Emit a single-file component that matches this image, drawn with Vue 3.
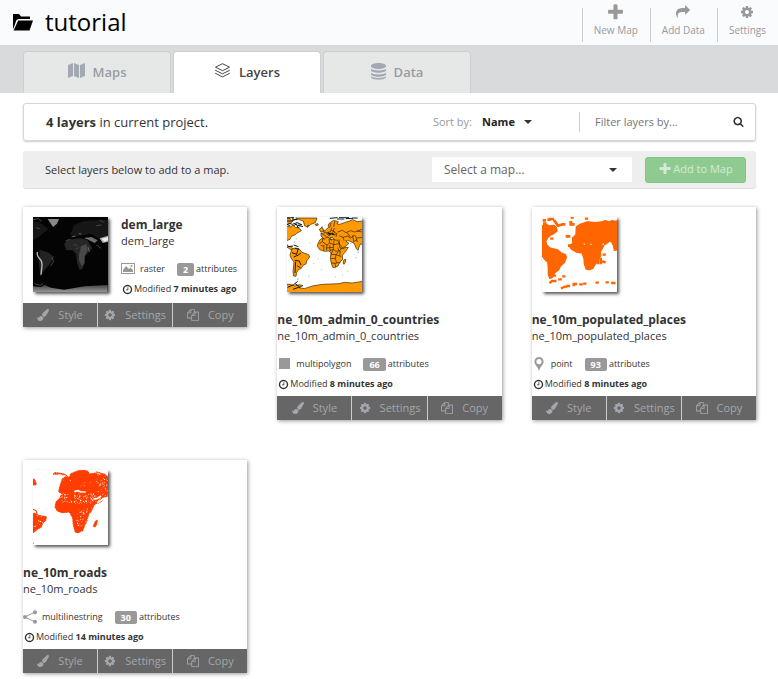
<script setup>
import { ref } from 'vue'

const icons = {
  plus: 'M1600 736v192q0 40-28 68t-68 28h-416v416q0 40-28 68t-68 28h-192q-40 0-68-28t-28-68v-416h-416q-40 0-68-28t-28-68v-192q0-40 28-68t68-28h416v-416q0-40 28-68t68-28h192q40 0 68 28t28 68v416h416q40 0 68 28t28 68z',
  share: 'M1792 640q0 26-19 45l-512 512q-19 19-45 19t-45-19-19-45v-256h-224q-98 0-175.5 6t-154 21.5-133 42.5-105.5 69.5-80 101-48.5 138.5-17.5 181q0 55 5 123 0 6 2.5 23.5t2.5 26.5q0 15-8.5 25t-23.5 10q-16 0-28-17-7-9-13-22t-13.5-30-10.5-24q-127-285-127-451 0-199 53-333 162-403 875-403h224v-256q0-26 19-45t45-19 45 19l512 512q19 19 19 45z',
  cog: 'M1152 896q0-106-75-181t-181-75-181 75-75 181 75 181 181 75 181-75 75-181zm512-109v222q0 12-8 23t-20 13l-185 28q-19 54-39 91 35 50 107 138 10 12 10 25t-9 23q-27 37-99 108t-94 71q-12 0-26-9l-138-108q-44 23-91 38-16 136-29 186-7 28-36 28h-222q-14 0-24.5-8.5t-11.5-21.5l-28-184q-49-16-90-37l-141 107q-10 9-25 9-14 0-25-11-126-114-165-168-7-10-7-23 0-12 8-23 15-21 51-66.5t54-70.5q-27-50-41-99l-183-27q-13-2-21-12.5t-8-23.5v-222q0-12 8-23t19-13l186-28q14-46 39-92-40-57-107-138-10-12-10-24 0-10 9-23 26-36 98.5-107.5t94.5-71.5q13 0 26 10l138 107q44-23 91-38 16-136 29-186 7-28 36-28h222q14 0 24.5 8.5t11.5 21.5l28 184q49 16 90 37l142-107q9-9 24-9 13 0 25 10 129 119 165 170 7 8 7 22 0 12-8 23-15 21-51 66.5t-54 70.5q26 50 41 98l183 28q13 2 21 12.5t8 23.5z',
  search: 'M1216 832q0-185-131.5-316.5t-316.5-131.5-316.5 131.5-131.5 316.5 131.5 316.5 316.5 131.5 316.5-131.5 131.5-316.5zm512 832q0 52-38 90t-90 38q-54 0-90-38l-343-342q-179 124-399 124-143 0-273.5-55.5t-225-150-150-225-55.5-273.5 55.5-273.5 150-225 225-150 273.5-55.5 273.5 55.5 225 150 150 225 55.5 273.5q0 220-124 399l343 343q37 37 37 90z',
  clock: 'M1024 544v448q0 14-9 23t-23 9h-320q-14 0-23-9t-9-23v-64q0-14 9-23t23-9h224v-352q0-14 9-23t23-9h64q14 0 23 9t9 23zm416 352q0-148-73-273t-198-198-273-73-273 73-198 198-73 273 73 273 198 198 273 73 273-73 198-198 73-273zm224 0q0 209-103 385.5t-279.5 279.5-385.5 103-385.5-103-279.5-279.5-103-385.5 103-385.5 279.5-279.5 385.5-103 385.5 103 279.5 279.5 103 385.5z',
  brush: 'M1615 0q70 0 122.5 46.5t52.5 116.5q0 63-45 151-332 629-465 752-97 91-218 91-126 0-216.5-92.5t-90.5-219.5q0-128 92-212l638-579q59-54 130-54zm-909 1034q39 76 106.5 130t150.5 76l1 71q4 213-129.5 347t-348.5 134q-123 0-218-46.5t-152.5-127.5-86.5-183-29-220q7 5 41 30t62 44.5 59 36.5 46 17q41 0 55-37 25-66 57.5-112.5t69.5-76 88-47.5 103-25.5 125-10.5z',
  copy: 'M1696 384q40 0 68 28t28 68v1216q0 40-28 68t-68 28h-960q-40 0-68-28t-28-68v-288h-544q-40 0-68-28t-28-68v-672q0-40 20-88t48-76l408-408q28-28 76-48t88-20h416q40 0 68 28t28 68v328q68-40 128-40h416zm-544 213l-299 299h299v-299zm-640-384l-299 299h299v-299zm196 647l316-316v-416h-384v416q0 40-28 68t-68 28h-416v640h512v-256q0-40 20-88t48-76zm956 804v-1152h-384v416q0 40-28 68t-68 28h-416v640h896z'
}

const actions = [
  { label: 'New Map', icon: 'plus' },
  { label: 'Add Data', icon: 'share' },
  { label: 'Settings', icon: 'cog' }
]

const tabs = ['Maps', 'Layers', 'Data']
const active = ref('Layers')

const layers = [
  { name: 'dem_large', kind: 'raster', attributes: 2, modified: '7 minutes ago', thumb: 'dem' },
  { name: 'ne_10m_admin_0_countries', kind: 'multipolygon', attributes: 66, modified: '8 minutes ago', thumb: 'countries' },
  { name: 'ne_10m_populated_places', kind: 'point', attributes: 93, modified: '8 minutes ago', thumb: 'places' },
  { name: 'ne_10m_roads', kind: 'multilinestring', attributes: 30, modified: '14 minutes ago', thumb: 'roads' }
]

const tools = [
  { label: 'Style', icon: 'brush' },
  { label: 'Settings', icon: 'cog' },
  { label: 'Copy', icon: 'copy' }
]

const sort = ref('Name')
const query = ref('')
const map = ref('')

// Gaps of the road network: short strokes scattered by a seeded generator.
function scatter(seed, count, x, y, w, h) {
  let s = seed
  const next = () => (s = (s * 16807) % 2147483647) / 2147483647
  let d = ''
  for (let i = 0; i < count; i++) {
    d += `M${(x + next() * w).toFixed(1)} ${(y + next() * h).toFixed(1)}l${(next() * 6 - 3).toFixed(1)} ${(next() * 5 - 2).toFixed(1)}`
  }
  return d
}
const roadGaps =
  scatter(11, 110, 84, 70, 104, 30) +
  scatter(29, 60, 132, 114, 42, 56) +
  scatter(47, 44, 194, 14, 31, 80) +
  scatter(83, 16, 4, 130, 34, 44) +
  scatter(71, 8, 90, 14, 100, 44)
</script>

<template>
  <div class="page">
    <header class="top">
      <h1 class="project">
        <svg class="folder" viewBox="0 0 20 17" aria-hidden="true">
          <path d="M0 0h6l2 2.500h9V5H5.500L3.500 6 .8 13.500 0 15z" />
          <path d="M5.200 6.500H20L16.500 16.500H.6z" />
        </svg>
        tutorial
      </h1>
      <nav class="actions">
        <a v-for="a in actions" :key="a.label" class="action" href="#">
          <svg class="action-icon" :class="a.icon" viewBox="0 0 1792 1792" aria-hidden="true"><path :d="icons[a.icon]" /></svg>
          {{ a.label }}
        </a>
      </nav>
    </header>

    <nav class="tabs">
      <a v-for="t in tabs" :key="t" class="tab" :class="{ active: t === active }" href="#" @click.prevent="active = t">
        <svg v-if="t === 'Maps'" class="tab-icon" viewBox="0 0 17 15" aria-hidden="true">
          <path d="M0 2L5 0v13L0 15zM6 0l5 2v13l-5-2zM12 2l5-2v13l-5 2z" />
        </svg>
        <svg v-else-if="t === 'Layers'" class="tab-icon outline" viewBox="0 0 17 15" aria-hidden="true">
          <path d="M8.500 .7L15.500 4.200 8.500 7.700 1.500 4.200zM1.200 7.200L8.500 10.800l7.300-3.600M1.200 10.200L8.500 13.900l7.300-3.700" />
        </svg>
        <svg v-else class="tab-icon data" viewBox="0 0 15 17" aria-hidden="true">
          <path d="M0 3C0-1 15-1 15 3S0 7 0 3zM0 5.800c2 2.200 13 2.200 15 0v1.400c0 3.300-15 3.300-15 0zM0 9.800c2 2.200 13 2.200 15 0v1.400c0 3.300-15 3.300-15 0zM0 13.300c2 2.200 13 2.200 15 0v.8c0 3.500-15 3.500-15 0z" />
        </svg>
        <span>{{ t }}</span>
      </a>
    </nav>

    <main class="content">
      <section class="bar filter-bar">
        <p class="count"><strong>4 layers</strong> in current project.</p>
        <label class="sort-label" for="sort">Sort by:</label>
        <div class="pick sort">
          <select id="sort" v-model="sort">
            <option>Name</option>
            <option>Date</option>
          </select>
          <svg class="caret" viewBox="0 0 8 4" aria-hidden="true"><path d="M0 0h8L4 4z" /></svg>
        </div>
        <div class="search">
          <input v-model="query" type="text" placeholder="Filter layers by..." aria-label="Filter layers" />
          <svg class="search-icon" viewBox="0 0 1792 1792" aria-hidden="true"><path :d="icons.search" /></svg>
        </div>
      </section>

      <section class="bar map-bar">
        <label class="hint" for="map">Select layers below to add to a map.</label>
        <div class="pick map-pick">
          <select id="map" v-model="map">
            <option value="">Select a map...</option>
          </select>
          <svg class="caret" viewBox="0 0 8 4" aria-hidden="true"><path d="M0 0h8L4 4z" /></svg>
        </div>
        <button class="add" type="button">
          <svg class="add-icon" viewBox="0 0 1792 1792" aria-hidden="true"><path :d="icons.plus" /></svg>Add to Map
        </button>
      </section>

      <section class="grid">
        <article v-for="l in layers" :key="l.name" class="card" :class="{ stacked: l.thumb !== 'dem' }">
          <div class="body">
            <svg v-if="l.thumb === 'dem'" class="thumb" viewBox="0 0 225 225" aria-hidden="true">
              <defs>
                <filter id="soft" x="-20%" y="-20%" width="140%" height="140%"><feGaussianBlur stdDeviation="2" /></filter>
                <linearGradient id="ice" x1="0" y1="0" x2="0" y2="1">
                  <stop offset="0" stop-color="#444" /><stop offset="1" stop-color="#aaa" />
                </linearGradient>
              </defs>
              <rect width="225" height="225" fill="#040404" />
              <g filter="url(#soft)">
                <path d="M44 6h34l-6 14-12 10-8-12z" fill="#888" />
                <path d="M0 12l22 6 24 18-26 22-20 12z" fill="#181818" />
                <path d="M94 82l10-14 38-4 20 4 16 26-10 10-12 14 0 18-8 20-8 2-8-22-2-24-10-12-20 0z" fill="#282828" />
                <path d="M144 88l16-6 4 18-10 20 0 18-8 10-8-18 0-16z" fill="#484848" />
                <path d="M112 52l12-28 30-12 71-4v56l-20 6-30-20-40 6-14 4z" fill="#181818" />
                <path d="M20 98l24 8 20 14-14 22-18 20-10 18-4-40z" fill="#242424" />
                <path d="M200 64l25-8v18l-16 4z" fill="#aaa" />
                <path d="M156 62l20-2 18 10-8 8-14-6z" fill="#666" />
                <path d="M0 208l24 2 10-6 20 8 40 6 60-10 70-4v26H0z" fill="url(#ice)" />
              </g>
              <path d="M14 105q-4 8 4 18 10 8 9 22l-3 28" fill="none" stroke="#bbb" stroke-width="4" />
              <path d="M205 65l20-5v10l-10 4z" fill="#eee" />
              <path d="M156 64l18 2 12 9M116 60l12-3M165 90l4 14M137 50l9 1" fill="none" stroke="#888" stroke-width="2" />
              <path d="M4 200l18 5 8-5M0 8l16-3 10 8M10 32l10 3" fill="none" stroke="#666" stroke-width="2" />
              <path d="M56 120l6 14-10 14M98 72l14-6M200 10l14 6M190 26l16-2M190 84l14 10M122 82l12 4M128 96l10-4" fill="none" stroke="#444" stroke-width="3" />
            </svg>

            <svg v-else-if="l.thumb === 'countries'" class="thumb" viewBox="0 0 225 225" aria-hidden="true">
              <rect width="225" height="225" fill="#fff" />
              <g fill="#ff9900" stroke="#332200" stroke-width="2" stroke-linejoin="round">
                <path d="M26 3h64l-5 14-14 5-10 9-8-5-4-14-12-4z" />
                <path d="M-2 27l12 3 8-6 8 8 8-2 9 11-12 7-8 6-10 4-4 9-13 5z" />
                <path d="M-2 0h8l4 8 7 5-6 6-13 5z" />
                <path d="M-2 80l6 8 9 1 4 7 6 4-2 4-8-5-7-5-10-6z" />
                <path d="M14 97l10-4 12 2 9 11 20 7 3 7-9 12-2 9-9 4-5 9-9 4-5 9-2 11-7-1-2-14 3-28-8-10-4-10z" />
                <path d="M92 82l6-13 10-7 18-2 2 6 13 1 18-1 10 17 4 9 11-1-9 14-9 10 1 13-8 6-6 13-10 5-6-1-5-16-2-13 2-13-5-7-15 1-14-5-7-10z" />
                <path d="M170 130l6-4-1 10-4 6-3-4z" />
                <path d="M102 57v-9h11l-8-9 10 1 9-8v-10l7-6 9-6 14 4-4 7 8 1 14-5 13-4 12-5 14 6 16-2v72l-6-4-5 10-3 10-5-5-7-17-10-4-9-4-6 2 10 7-10 9-9 4-7-6-8-16-8-1-7-7-7-1 3 9-10-10-5 1-6 6z" />
                <path d="M97 37l9-6 4 11-9 3zM102 32l4-3M84 22l9-2 1 4-7 2z" />
                <path d="M-2 202l12 0 14 5 13-4 11 3-12 6 16 3 24-8 30-5 50-2 16-4 24 2 31-5v36H-2z" />
              </g>
              <path d="M108 62l-2 12-9 6M106 74l14 10 8-6-2-12M128 78l12 5 1-15M140 83l17-3-1-13M157 80l2 13 13 2M120 84l-2 15M111 83l-1 18M101 85l9 3M128 84l1 17M140 83l-1 14 8 6 12-2 5-8M129 100l10-2M139 97l-7 15 15 1 6-8M147 113l16 6M131 124l14 1 2-12M145 125l4 12 12 0M133 138l16 1M146 150l-2-12M160 102l-2 14M118 93l20-2M152 92l5 12" fill="none" stroke="#2a1c00" stroke-width="2" />
              <path d="M104 50l14 8M112 44l8 4 8-4M118 50l10 5 6-8M124 56l12-8 9 8M130 46l4-14M126 51l20 1M140 44l10 6-3 9M142 33l-4 12M132 38l12 8M152 45l14-5 11 7 14-6 12 4 22-8M156 56l13 5 12-4 10 6 11-8 9 8 14-2M180 47l10 13M197 55l3 19 10-6M207 62l4 13M168 60l3 11M128 32l4-14M140 30l3-17M210 42l15 3" fill="none" stroke="#2a1c00" stroke-width="2" />
              <path d="M122 47l9 5M134 49l6 4" fill="none" stroke="#1b1408" stroke-width="4" />
              <path d="M0 4l20-3-4 6 16 1M0 12h14l10-4M4 18l12 4 14-5 14 6-12 2 16 4M20 26l8-5 6 13M0 22l10 5M128 4l24-2M150 6h22M156 1h30M176 5l22-1M196 3h16M2 89l16-2M20 84l14 5M24 94l12 3M15 107l14 5 4-15M20 120l14-6 8-6M23 130l14 2 5 12M26 134l-2 34M30 146l10 6M60 28l5-3M2 211l18-8 12-10M24 200l12 8M40 209l-22 8" fill="none" stroke="#171717" stroke-width="3" />
              <path d="M28 66h2M20 75h3M92 125h2M78 140h2M102 158h2M165 174h2M64 178h3M190 80h3M200 112h2M205 122h3M213 103l1 6M181 162h3M68 78h2M30 186h5M144 180h2" stroke="#777" stroke-width="2" />
            </svg>

            <svg v-else-if="l.thumb === 'places'" class="thumb" viewBox="0 0 225 225" aria-hidden="true">
              <rect width="225" height="225" fill="#fff" />
              <g fill="#ff6600" stroke="#ff6600" stroke-width="6" stroke-linejoin="round">
                <path d="M-4 28l18-4 8 4 12-2 8 6 2 10-8 6-12 6-8 8-6 10 3 12 10 10 8 2 16 4 10 9 12 4 3 8-5 14-12 11-6 12-12 9-7 13-6 3-4-10 0-22-2-16-12-12-10-16z" />
                <path d="M104 30l12-8 18-6 6 0 20 2 18-2 12-4 12 4 8-4 12 2 8-4v86l-12 3-3-14-5-10-6-5-10 8-8 4-5 10-7 12 1 12-8 12-8 12-7 13-10 4-9-2-5-16-1-14-6-18-18-3-14-8-6-9 16-12-4-14 8-8z" />
              </g>
              <path d="M6 10h2M20 8h2M24 6h8M7 20h3M38 12l10 14 14-4h4M86 22h8M86 16h1M75 58h6M82 86h10M94 64v20M174 98l-7 18v22M176 126v12M184 134l3 1" fill="none" stroke="#ff6600" stroke-width="8" stroke-linejoin="round" stroke-linecap="square" />
              <path d="M89 2h3M132 5h3M28 65h3M185 113h3M64 178h3M52 187h4M25 196l5-4h10M35 176h4M60 213l8-4h4M77 207h4M95 204v-3h7M115 202h4M127 200h3M164 197h3M194 196h3M211 198h6" fill="none" stroke="#ff6600" stroke-width="7" stroke-linecap="square" />
              <path d="M128 83l-2-4M146 80l2 4M183 84l1-5" stroke="#fff" stroke-width="3" />
            </svg>

            <svg v-else class="thumb" viewBox="0 0 225 225" aria-hidden="true">
              <defs>
                <clipPath id="roads-frame"><rect width="225" height="225" /></clipPath>
              </defs>
              <rect width="225" height="225" fill="#fff" />
              <g clip-path="url(#roads-frame)">
                <g fill="#ff3d00" stroke="#ff3d00" stroke-width="3" stroke-linejoin="round" stroke-dasharray="4 1">
                  <path d="M88 26l10-6 12 1 3-10 20-8 18-3 14 4 4 8 18-3 12 6 10-2 17 7v58l-12 4-10 2 8 5-10 8-14 4-7 8-6 15-8 9-5 20-7 16-9 14-9 5-10-1-6-21-2-22-10-18-22 2-14-5-7-11 3-16 12-13 4-10-8-9 3-13z" />
                  <path d="M-3 130l13 0 6 6 24 4-2 12-8 6-5 14-10 5-18 14z" />
                  <path d="M187 154l6-4-2 14-5 7-5-2zM-3 28l7-1 6 14-2 4H-3z" />
                </g>
                <path d="M60 12h16M64 8l28 4 10 6M76 9l16 6M0 118l9 4 4 8M190 6l28 8" fill="none" stroke="#ff3d00" stroke-width="4" stroke-dasharray="5 1" />
                <path :d="roadGaps" fill="none" stroke="#fff" stroke-width="3" />
                <path d="M124 65l10-3 10 4 14 0M181 87l11-1 12-8M192 98l24-14" fill="none" stroke="#fff" stroke-width="5" />
                <path d="M72 98l50 8 14 6 46-2M122 70l-4 36M150 68l-4 42M164 72l6 34M136 114l6 60M160 112l-12 72M174 108l-24 50" fill="none" stroke="#ff3d00" stroke-width="4" />
                <path d="M0 220h2" stroke="#ff3d00" stroke-width="4" />
              </g>
            </svg>

            <div class="info">
              <h2 class="name">{{ l.name }}</h2>
              <p class="sub">{{ l.name }}</p>
              <p class="meta">
                <svg class="kind-icon" :class="l.kind" viewBox="0 0 14 14" aria-hidden="true">
                  <template v-if="l.kind === 'raster'">
                    <rect x=".5" y="1.500" width="13" height="10" fill="none" stroke="#999" />
                    <path d="M2 10V8l3-4 3 3 1.500-1.500L12 8v2z" />
                    <circle cx="10.500" cy="4" r="1" />
                  </template>
                  <rect v-else-if="l.kind === 'multipolygon'" x="2" y="1" width="11" height="11" />
                  <path v-else-if="l.kind === 'point'" fill-rule="evenodd" d="M7 0a4.600 4.600 0 0 1 4.600 4.600C11.600 8 8.500 9 7 14 5.500 9 2.400 8 2.400 4.600A4.600 4.600 0 0 1 7 0zm0 2a2.600 2.600 0 1 0 0 5.200A2.600 2.600 0 0 0 7 2z" />
                  <g v-else>
                    <path d="M12 2L2 7l10 5" fill="none" stroke="#999" />
                    <circle cx="12" cy="2.200" r="2" /><circle cx="2" cy="7" r="2" /><circle cx="12" cy="11.800" r="2" />
                  </g>
                </svg>
                <span class="kind">{{ l.kind }}</span>
                <span class="badge">{{ l.attributes }}</span>
                <span>attributes</span>
              </p>
              <p class="modified">
                <svg class="clock" viewBox="0 0 1792 1792" aria-hidden="true"><path :d="icons.clock" /></svg>
                <span>Modified <strong>{{ l.modified }}</strong></span>
              </p>
            </div>
          </div>
          <footer class="tools">
            <button v-for="t in tools" :key="t.label" class="tool" type="button">
              <svg class="tool-icon" viewBox="0 0 1792 1792" aria-hidden="true"><path :d="icons[t.icon]" /></svg>
              {{ t.label }}
            </button>
          </footer>
        </article>
      </section>
    </main>
  </div>
</template>

<style>
body {
  margin: 0;
  background: #fff;
}
</style>

<style scoped>
.page {
  font-family: "Open Sans", "Noto Sans", sans-serif;
  font-size: 11px;
  color: #333;
}
h1, h2, p {
  margin: 0;
}
a {
  text-decoration: none;
}
svg {
  display: block;
  flex: none;
  fill: currentColor;
}
button, select, input {
  font-family: inherit;
  border: 0;
  margin: 0;
  padding: 0;
  background: none;
}

.top {
  display: flex;
  justify-content: space-between;
  height: 45px;
  background: #f9fbfd;
}
.project {
  display: flex;
  align-items: center;
  gap: 12px;
  padding: 0 0 2px 13px;
  font-size: 24px;
  font-weight: 400;
  line-height: 43px;
  color: #000;
}
.folder {
  width: 20px;
  height: 17px;
  margin-top: 2px;
}
.actions {
  display: flex;
  padding-top: 8px;
}
.action {
  display: flex;
  flex-direction: column;
  align-items: center;
  height: 34px;
  padding: 0 12px 0 11px;
  border-left: 1px solid #ccc;
  font-size: 10px;
  line-height: 18px;
  color: #999;
}
.action-icon {
  width: 14px;
  height: 14px;
  margin: -3px 0 2px;
}
.action-icon.plus {
  width: 19px;
  height: 19px;
  margin: -5px 0 -1px;
}

.tabs {
  display: flex;
  gap: 2px;
  padding: 5px 23px 0;
  border-top: 1px solid #d0d8de;
  box-sizing: border-box;
  height: 48px;
  background: #d9dadc;
}
.tab {
  display: flex;
  align-items: center;
  justify-content: center;
  gap: 8px;
  box-sizing: border-box;
  width: 148px;
  padding-bottom: 1px;
  border: 1px solid #ccced1;
  border-bottom: 0;
  border-radius: 4px 4px 0 0;
  background: #e6e8e8;
  font-size: 13px;
  font-weight: 600;
  color: #999ca3;
}
.tab.active {
  background: #fff;
  color: #444;
}
.tab-icon {
  width: 17px;
  height: 15px;
  margin-bottom: 4px;
  color: #a4a8b3;
}
.tab-icon.data {
  width: 15px;
  height: 17px;
  margin-bottom: 2px;
}
.tab-icon.outline {
  fill: none;
  stroke: #444;
}

.content {
  padding: 10px 22px 20px 23px;
}
.bar {
  display: flex;
  align-items: center;
  box-sizing: border-box;
  border-radius: 3px;
}
.filter-bar {
  height: 38px;
  padding: 0 11px 1px 22px;
  border: 1px solid #d5d6d8;
  box-shadow: 0 1px 2px #ccc;
}
.count {
  flex: 1;
  font-size: 13px;
}
.sort-label {
  color: #999;
}
.pick {
  display: grid;
  align-items: center;
}
.pick select, .pick .caret {
  grid-area: 1 / 1;
}
.pick select {
  appearance: none;
  width: 100%;
}
.caret {
  justify-self: end;
  width: 8px;
  height: 4px;
  pointer-events: none;
}
.sort {
  width: 50px;
  margin: 0 47px 0 10px;
}
.sort select {
  font-size: 11px;
  font-weight: 700;
  color: #222;
}
.search {
  display: flex;
  align-items: center;
  width: 149px;
  height: 20px;
  padding-left: 15px;
  border-left: 1px solid #ccc;
}
.search input {
  flex: 1;
  min-width: 0;
  font-size: 11px;
  color: #333;
  outline: 0;
}
.search input::placeholder {
  color: #757575;
  opacity: 1;
}
.search-icon {
  width: 11px;
  height: 11px;
}

.map-bar {
  height: 37px;
  margin-top: 10px;
  padding: 0 10px 0 22px;
  background: #eee;
  box-shadow: 0 1px 1px #ddd;
}
.hint {
  flex: 1;
}
.map-pick {
  width: 200px;
  height: 25px;
  background: #fff;
}
.map-pick select {
  padding-left: 12px;
  font-size: 12px;
  color: #666;
}
.map-pick .caret {
  margin-right: 15px;
}
.add {
  display: flex;
  align-items: center;
  justify-content: center;
  gap: 1px;
  box-sizing: border-box;
  width: 101px;
  height: 26px;
  margin-left: 13px;
  padding-bottom: 2px;
  border: 1px solid #80c584;
  border-radius: 3px;
  background: #8fcb91;
  font-size: 11px;
  color: #d3ebd4;
}
.add-icon {
  width: 14px;
  height: 14px;
}

.grid {
  display: grid;
  grid-template-columns: repeat(3, 1fr);
  align-items: start;
  gap: 40px 30px;
  margin-top: 19px;
}
.card {
  background: #fff;
  box-shadow: 1px 1px 4px #999;
}
.body {
  display: flex;
  gap: 13px;
  padding: 9px 0 4px 10px;
}
.thumb {
  width: 75px;
  height: 75px;
  margin-top: 1px;
  box-shadow: 2px 2px 3px #555;
}
.stacked .body {
  flex-direction: column;
  gap: 19px;
  padding: 9px 0 2px;
}
.stacked .thumb {
  margin-left: 10px;
}
.name {
  font-size: 12px;
  font-weight: 700;
  line-height: 18px;
}
.sub {
  line-height: 14px;
}
.meta, .modified {
  display: flex;
  align-items: center;
  font-size: 9px;
  line-height: 20px;
}
.meta {
  margin-top: 11px;
}
.kind-icon {
  width: 14px;
  height: 14px;
  margin-right: 5px;
  color: #999;
}
.badge {
  margin: 0 2px 0 12px;
  padding: 0 6px;
  border-radius: 2px;
  background: #999;
  font-weight: 700;
  line-height: 13px;
  color: #fff;
}
.modified {
  gap: 1px;
  padding-left: 1px;
}
.clock {
  width: 11px;
  height: 11px;
}
.tools {
  display: flex;
}
.tool {
  display: flex;
  flex: 1;
  align-items: center;
  justify-content: center;
  gap: 9px;
  height: 24px;
  padding-bottom: 1px;
  background: #666;
  font-size: 11px;
  color: #a3a6ab;
}
.tool + .tool {
  border-left: 1px solid #ccc;
}
.tool-icon {
  width: 12px;
  height: 12px;
}
</style>
